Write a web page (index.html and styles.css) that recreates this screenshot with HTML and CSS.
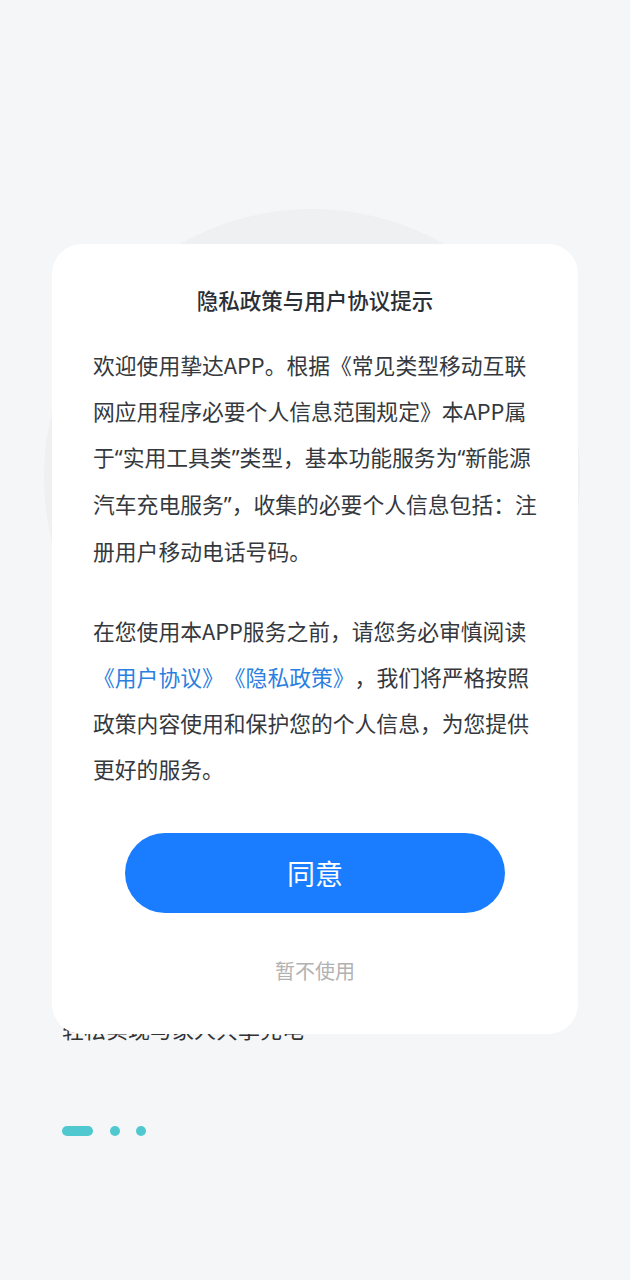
FILE: index.html
```html
<!DOCTYPE html>
<html lang="zh-CN">
<head>
<meta charset="utf-8">
<link rel="stylesheet" href="styles.css">
</head>
<body>
<div class="page">
  <div class="bg-circle"></div>
  <div class="guide">
    <p class="guide-text">轻松实现与家人共享充电</p>
    <div class="dots">
      <span class="dot active"></span>
      <span class="dot"></span>
      <span class="dot"></span>
    </div>
  </div>
  <div class="overlay">
    <div class="dialog">
      <h1 class="title">隐私政策与用户协议提示</h1>
      <p class="para">欢迎使用挚达APP。根据《常见类型移动互联<br>网应用程序必要个人信息范围规定》本APP属<br>于<span class="q">“</span>实用工具类<span class="q">”</span>类型，基本功能服务为<span class="q">“</span>新能源<br>汽车充电服务<span class="q">”</span>，收集的必要个人信息包括：注<br>册用户移动电话号码。</p>
      <p class="para para-2">在您使用本APP服务之前，请您务必审慎阅读<br><span class="link">《用户协议》《隐私政策》</span>，我们将严格按照<br>政策内容使用和保护您的个人信息，为您提供<br>更好的服务。</p>
      <button class="btn-agree">同意</button>
      <div class="btn-decline">暂不使用</div>
    </div>
  </div>
</div>
</body>
</html>
```
FILE: styles.css
```css
* { box-sizing: border-box; }
html, body {
  margin: 0;
  padding: 0;
  background: #f5f6f8;
  font-family: "Noto Sans CJK SC", "Noto Sans", sans-serif;
}
.page {
  position: relative;
  width: 630px;
  height: 1280px;
  overflow: hidden;
}
.bg-circle {
  position: absolute;
  left: 44px;
  top: 209px;
  width: 536px;
  height: 536px;
  border-radius: 50%;
  background: #eef0f2;
}
.guide {
  position: relative;
  padding: 1013px 0 0 62px;
}
.guide-text {
  margin: 0;
  font-size: 22px;
  line-height: 30px;
  color: #333;
}
.dots {
  display: flex;
  align-items: center;
  gap: 16px;
  margin-top: 83px;
}
.dot {
  width: 10px;
  height: 10px;
  border-radius: 5px;
  background: #4fc8cf;
}
.dot.active { width: 31px; margin-right: 1px; }
.overlay {
  position: absolute;
  inset: 0;
  padding: 244px 52px 0;
}
.dialog {
  background: #fff;
  border-radius: 30px;
  height: 790px;
  padding: 40px 30px 0 41px;
  display: flex;
  flex-direction: column;
  align-items: center;
}
.title {
  margin: 0 0 0 -11px;
  font-size: 21.5px;
  font-weight: 500;
  line-height: 32px;
  color: #2b2f36;
}
.para {
  margin: 26px 0 0;
  align-self: stretch;
  font-size: 21.8px;
  line-height: 46px;
  color: #35383d;
  white-space: nowrap;
  text-spacing-trim: space-all;
}
.q { font-family: "Noto Sans", sans-serif; }
.para-2 { margin-top: 34px; }
.link { color: #2a80e0; }
.btn-agree {
  margin: 41px 0 0 -11px;
  width: 380px;
  height: 80px;
  border: 0;
  border-radius: 40px;
  background: #1a7cff;
  color: #fff;
  font-family: inherit;
  font-size: 28px;
  padding: 0;
}
.btn-decline {
  margin: 43px 0 0 -11px;
  font-size: 20px;
  line-height: 30px;
  color: #b2b2b2;
}
```
